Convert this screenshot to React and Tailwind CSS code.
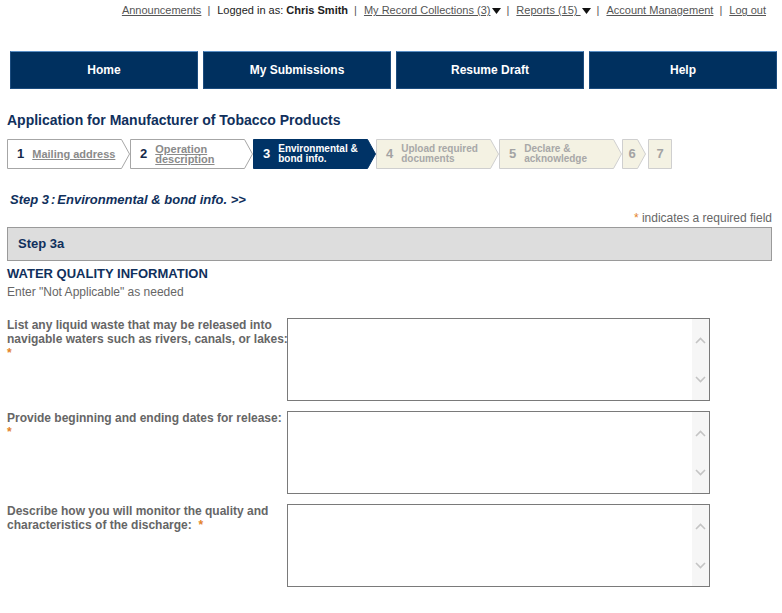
import React from "react";

const navy = "#10305c";

function Caret() {
  return (
    <svg width="9" height="6" viewBox="0 0 9 6" className="inline-block ml-[1px] align-middle">
      <polygon points="0,0 9,0 4.5,6" fill="#111" />
    </svg>
  );
}

function Sep() {
  return <span className="ml-[6px] mr-[7px] text-[#555]">|</span>;
}

function StepShape({ width, fill, stroke, tip = true }) {
  const w = width;
  const pts = tip
    ? `0.5,0.5 ${w - 8.5},0.5 ${w - 0.5},15 ${w - 8.5},29.5 0.5,29.5`
    : `0.5,0.5 ${w - 0.5},0.5 ${w - 0.5},29.5 0.5,29.5`;
  return (
    <svg width={w} height="30" className="absolute left-0 top-0">
      <polygon points={pts} fill={fill} stroke={stroke} strokeWidth="1" />
    </svg>
  );
}

const steps = [
  { n: "1", label: ["Mailing address"], state: "done" },
  { n: "2", label: ["Operation", "description"], state: "done" },
  { n: "3", label: ["Environmental &", "bond info."], state: "active" },
  { n: "4", label: ["Upload required", "documents"], state: "todo" },
  { n: "5", label: ["Declare &", "acknowledge"], state: "todo" },
];

function Step({ step }) {
  const done = step.state === "done";
  const active = step.state === "active";
  const fill = active ? "#003366" : done ? "#ffffff" : "#f4f2e3";
  const stroke = active ? "#003366" : done ? "#a6a6a6" : "#cfcfcf";
  const numColor = active ? "text-white" : done ? "text-[#15294a]" : "text-[#a3a3a3]";
  const labelColor = active
    ? "text-white"
    : done
    ? "text-[#8a8a8a] underline"
    : "text-[#a8a8a8]";
  const twoLine = step.label.length > 1;
  return (
    <div className="relative w-[123px] h-[30px] shrink-0">
      <StepShape width={123} fill={fill} stroke={stroke} />
      <div className="relative flex items-center h-full pl-[10px]">
        <span className={`text-[13px] font-bold ${numColor}`}>{step.n}</span>
        <span
          className={`ml-[8px] font-bold whitespace-nowrap ${labelColor} ${
            twoLine ? (done ? "text-[11px] leading-[10px]" : "text-[10px] leading-[10px]") : "text-[11px]"
          }`}
        >
          {step.label.map((l, i) => (
            <span key={i} className="block">
              {l}
            </span>
          ))}
        </span>
      </div>
    </div>
  );
}

function Chevron({ up }) {
  return (
    <svg width="11" height="7" viewBox="0 0 11 7">
      <polyline
        points={up ? "1,6 5.5,1.5 10,6" : "1,1 5.5,5.5 10,1"}
        fill="none"
        stroke="#c4c4c4"
        strokeWidth="1.6"
      />
    </svg>
  );
}

function FakeTextarea() {
  return (
    <div className="w-[423px] h-[83px] border border-[#7a7a7a] bg-white flex justify-end shrink-0">
      <div className="w-[17px] h-full bg-[#f6f6f6] flex flex-col items-center justify-between pt-[18px] pb-[17px]">
        <Chevron up />
        <Chevron />
      </div>
    </div>
  );
}

const Req = () => <span className="text-[#e3832a]">*</span>;

function FieldRow({ children }) {
  return (
    <div className="flex mb-[10px]">
      <div className="w-[287px] shrink-0 pl-[7px] text-[12px] leading-[14px] font-bold text-[#666666] whitespace-nowrap">
        {children}
      </div>
      <FakeTextarea />
    </div>
  );
}

export default function App() {
  return (
    <div
      className="w-[782px] min-h-[613px] bg-white"
      style={{ fontFamily: '"Liberation Sans", Arial, sans-serif' }}
    >
      {/* top links */}
      <div className="h-[21px] flex items-center justify-end pr-[16px] text-[11px] text-[#222]">
        <a className="text-[#555] underline">Announcements</a>
        <Sep />
        <span>
          Logged in as: <b>Chris Smith</b>
        </span>
        <Sep />
        <a className="text-[#555] underline">My Record Collections (3)</a>
        <Caret />
        <Sep />
        <a className="text-[#555] underline">Reports (15)&nbsp;</a>
        <Caret />
        <Sep />
        <a className="text-[#555] underline">Account Management</a>
        <Sep />
        <a className="text-[#555] underline">Log out</a>
      </div>

      {/* main nav */}
      <div className="mt-[30px] pl-[10px] flex gap-[5px]">
        {["Home", "My Submissions", "Resume Draft", "Help"].map((t) => (
          <div
            key={t}
            className="w-[188px] h-[38px] bg-[#00305f] border border-[#1c4c7e] border-t-[#5a8fc6] flex items-center justify-center text-white text-[12px] font-bold"
          >
            {t}
          </div>
        ))}
      </div>

      {/* title */}
      <h1
        className="mt-[22px] h-[18px] leading-[18px] pl-[7px] text-[14px] font-bold"
        style={{ color: navy }}
      >
        Application for Manufacturer of Tobacco Products
      </h1>

      {/* steps */}
      <div className="mt-[10px] pl-[7px] flex h-[30px]">
        {steps.map((s) => (
          <Step key={s.n} step={s} />
        ))}
        <div className="relative w-[24px] h-[30px] shrink-0">
          <StepShape width={24} fill="#f4f2e3" stroke="#cfcfcf" />
          <div className="relative h-full w-[20px] flex items-center justify-center text-[13px] font-bold text-[#a3a3a3]">
            6
          </div>
        </div>
        <div className="relative w-[24px] h-[30px] shrink-0 ml-[2px]">
          <StepShape width={24} fill="#f4f2e3" stroke="#cfcfcf" tip={false} />
          <div className="relative h-full flex items-center justify-center text-[13px] font-bold text-[#a3a3a3]">
            7
          </div>
        </div>
      </div>

      {/* step heading */}
      <div
        className="mt-[23px] h-[16px] leading-[16px] pl-[10px] text-[13px] font-bold italic"
        style={{ color: navy }}
      >
        Step 3<span className="mx-[2px]">:</span>Environmental &amp; bond info. &gt;&gt;
      </div>

      <div className="mt-[2px] h-[16px] leading-[16px] pr-[10px] text-right text-[12px] text-[#666]">
        <Req /> indicates a required field
      </div>

      <div className="mt-[1px] mx-[7px] mr-[10px] h-[34px] bg-[#dddddd] border border-[#9a9a9a] flex items-center pl-[10px]">
        <span className="text-[13px] font-bold" style={{ color: navy }}>
          Step 3a
        </span>
      </div>

      <div
        className="mt-[5px] h-[16px] leading-[16px] pl-[7px] text-[13px] font-bold"
        style={{ color: navy }}
      >
        WATER QUALITY INFORMATION
      </div>
      <div className="mt-[2px] h-[16px] leading-[16px] pl-[7px] text-[12px] text-[#666]">
        Enter "Not Applicable" as needed
      </div>

      <div className="mt-[18px]">
        <FieldRow>
          List any liquid waste that may be released into
          <br />
          navigable waters such as rivers, canals, or lakes:
          <br />
          <Req />
        </FieldRow>
        <FieldRow>
          Provide beginning and ending dates for release:
          <br />
          <Req />
        </FieldRow>
        <FieldRow>
          Describe how you will monitor the quality and
          <br />
          characteristics of the discharge:&nbsp; <Req />
        </FieldRow>
      </div>
    </div>
  );
}
